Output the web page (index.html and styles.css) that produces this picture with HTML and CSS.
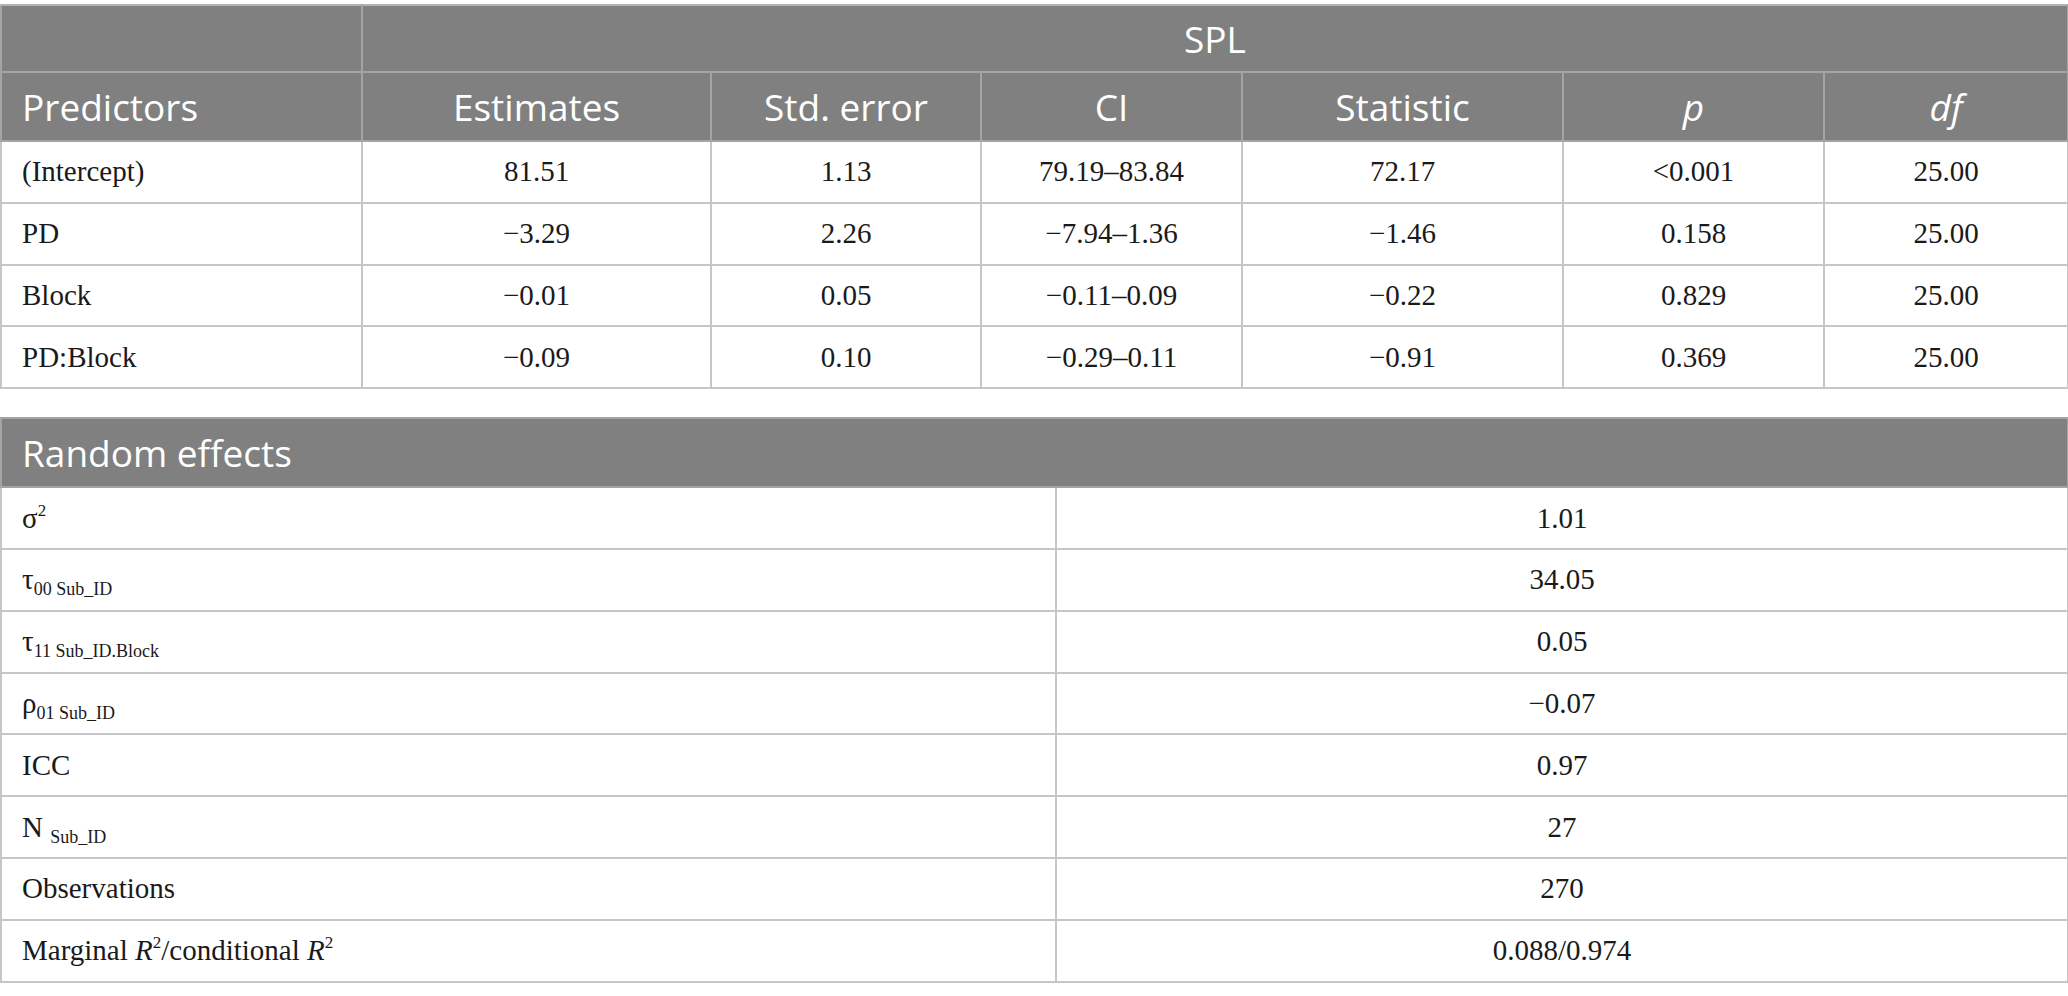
FILE: index.html
```html
<!DOCTYPE html>
<html lang="en">
<head>
<meta charset="utf-8">
<title>SPL model</title>
<link rel="stylesheet" href="styles.css">
</head>
<body>
<div class="page">
  <table class="tbl fixed">
    <colgroup>
      <col class="c1"><col class="c2"><col class="c3"><col class="c4"><col class="c5"><col class="c6"><col class="c7">
    </colgroup>
    <thead>
      <tr class="h1">
        <th></th>
        <th colspan="6" class="ctr">SPL</th>
      </tr>
      <tr class="h2">
        <th class="lft">Predictors</th>
        <th class="ctr">Estimates</th>
        <th class="ctr">Std. error</th>
        <th class="ctr">CI</th>
        <th class="ctr">Statistic</th>
        <th class="ctr"><i>p</i></th>
        <th class="ctr"><i>df</i></th>
      </tr>
    </thead>
    <tbody>
      <tr><td class="lft">(Intercept)</td><td>81.51</td><td>1.13</td><td>79.19–83.84</td><td>72.17</td><td>&lt;0.001</td><td>25.00</td></tr>
      <tr><td class="lft">PD</td><td>−3.29</td><td>2.26</td><td>−7.94–1.36</td><td>−1.46</td><td>0.158</td><td>25.00</td></tr>
      <tr><td class="lft">Block</td><td>−0.01</td><td>0.05</td><td>−0.11–0.09</td><td>−0.22</td><td>0.829</td><td>25.00</td></tr>
      <tr><td class="lft">PD:Block</td><td>−0.09</td><td>0.10</td><td>−0.29–0.11</td><td>−0.91</td><td>0.369</td><td>25.00</td></tr>
    </tbody>
  </table>

  <table class="tbl fixed re">
    <colgroup>
      <col class="r1"><col class="r2">
    </colgroup>
    <thead>
      <tr class="h2">
        <th colspan="2" class="lft">Random effects</th>
      </tr>
    </thead>
    <tbody>
      <tr><td class="lft">σ<sup class="sp">2</sup></td><td>1.01</td></tr>
      <tr><td class="lft">τ<sub class="sb">00 Sub_ID</sub></td><td>34.05</td></tr>
      <tr><td class="lft">τ<sub class="sb">11 Sub_ID.Block</sub></td><td>0.05</td></tr>
      <tr><td class="lft">ρ<sub class="sb">01 Sub_ID</sub></td><td>−0.07</td></tr>
      <tr><td class="lft">ICC</td><td>0.97</td></tr>
      <tr><td class="lft">N <sub class="sb">Sub_ID</sub></td><td>27</td></tr>
      <tr><td class="lft">Observations</td><td>270</td></tr>
      <tr><td class="lft">Marginal <i>R</i><sup class="sp">2</sup>/conditional <i>R</i><sup class="sp">2</sup></td><td>0.088/0.974</td></tr>
    </tbody>
  </table>
</div>
</body>
</html>
```

FILE: styles.css
```css
html, body {
  margin: 0;
  padding: 0;
  background: #ffffff;
}

.page {
  padding-top: 4px;
  display: flex;
  flex-direction: column;
  gap: 28px;
}

.tbl {
  border-collapse: collapse;
  width: 2067px;
  table-layout: fixed;
  font-family: "Liberation Serif", "Times New Roman", serif;
  font-size: 29px;
  color: #1a1a1a;
}

.c1 { width: 361px; }
.c2 { width: 349px; }
.c3 { width: 270px; }
.c4 { width: 261px; }
.c5 { width: 321px; }
.c6 { width: 261px; }
.c7 { width: 244px; }

.r1 { width: 1055px; }
.r2 { width: 1012px; }

.tbl th {
  background: #7f807f;
  color: #ffffff;
  font-family: "Open Sans", "Noto Sans", sans-serif;
  font-weight: 400;
  font-size: 37px;
  border: 2px solid #a3a4a3;
  padding: 0;
  line-height: 1;
}

.tbl .h1 th {
  height: 65px;
  border-top-color: #b3b3b3;
}

.tbl .h2 th {
  height: 67px;
}

.tbl td {
  border: 2px solid #c6c6c6;
  height: 59.8px;
  padding: 0;
  text-align: center;
  line-height: 1;
}

.tbl td + td {
  border-left-width: 1px;
}

.tbl th + th {
  border-left-width: 1px;
}

.tbl .lft {
  text-align: left;
  padding-left: 20px;
}

.tbl .ctr {
  text-align: center;
}

.tbl i {
  font-style: italic;
}

.sb {
  font-size: 18px;
  vertical-align: -6px;
  line-height: 0;
}

.sp {
  font-size: 17px;
  vertical-align: 12px;
  line-height: 0;
}
```
